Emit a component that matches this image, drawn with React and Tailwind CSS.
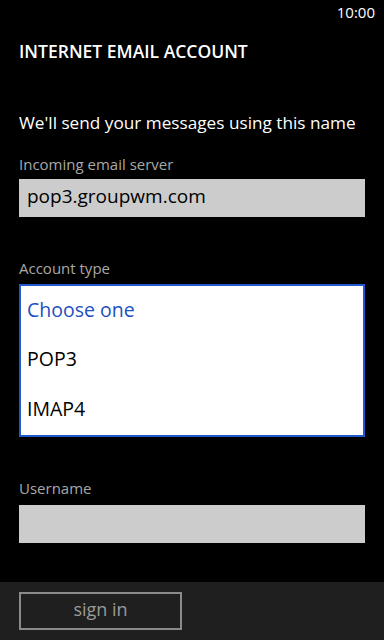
export default function App() {
  return (
    <div className="w-[384px] h-[640px] bg-black flex flex-col overflow-hidden font-['Open_Sans',sans-serif]">
      <div className="flex-1 flex flex-col px-[19px]">
        <div className="h-[24px] flex justify-end items-center -mr-[10px]">
          <span className="text-[15px] leading-[24px] text-white">10:00</span>
        </div>
        <div className="mt-[16px] text-[17.5px] leading-[22px] font-semibold text-white">INTERNET EMAIL ACCOUNT</div>
        <div className="mt-[50px] text-[17.2px] leading-[22px] text-white">We'll send your messages using this name</div>
        <div className="mt-[20px] text-[15px] leading-[20px] text-[#a8a8a8]">Incoming email server</div>
        <div className="mt-[5px] h-[38px] bg-[#cccccc] flex items-center pl-[8px] pb-[3px] text-[19px] text-black">pop3.groupwm.com</div>
        <div className="mt-[41px] text-[15px] leading-[20px] text-[#a8a8a8]">Account type</div>
        <div className="mt-[6px] h-[153px] bg-white border-2 border-[#2159d0] flex flex-col">
          <div className="flex-1 flex items-center pl-[6px] pb-[3px] text-[19.5px] text-[#1d4fbf]">Choose one</div>
          <div className="flex-1 flex items-center pl-[6px] pb-[3px] text-[19.5px] text-black">POP3</div>
          <div className="flex-1 flex items-center pl-[6px] pb-[3px] text-[19.5px] text-black">IMAP4</div>
        </div>
        <div className="mt-[41px] text-[15px] leading-[20px] text-[#a8a8a8]">Username</div>
        <div className="mt-[7px] h-[38px] bg-[#cccccc]"></div>
      </div>
      <div className="h-[58px] bg-[#1f1f1f] pl-[19px] pt-[10px]">
        <div className="w-[163px] h-[38px] border-2 border-[#8a8a8a] flex items-center justify-center text-[18px] text-[#9a9a9a] pb-[3px]">sign in</div>
      </div>
    </div>
  );
}
